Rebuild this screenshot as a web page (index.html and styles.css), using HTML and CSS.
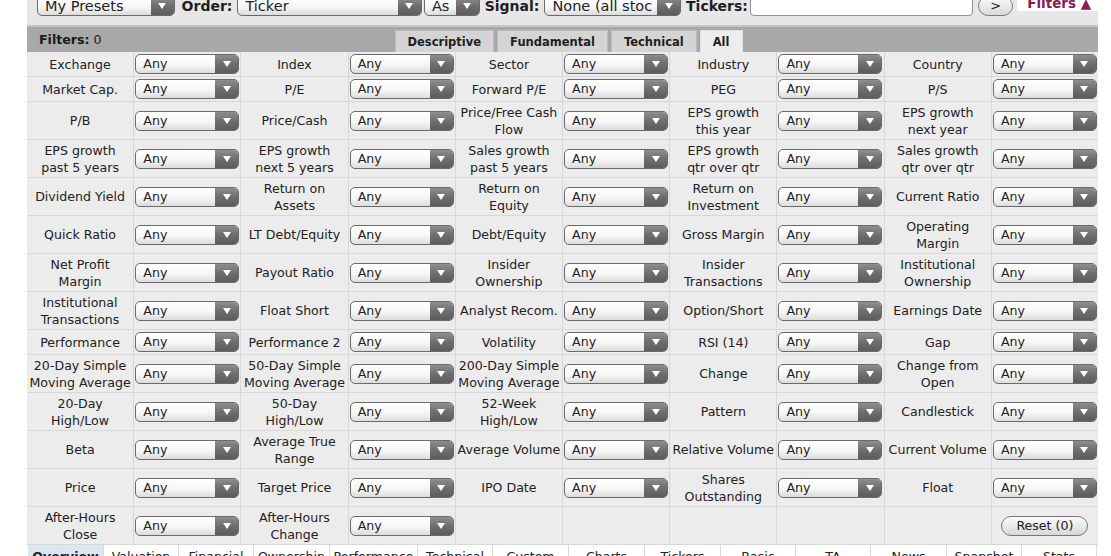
FILE: index.html
```html
<!DOCTYPE html>
<html lang="en">
<head>
<meta charset="utf-8">
<title>Screener Filters</title>
<link rel="stylesheet" href="styles.css">
</head>
<body>
<div class="screener">
  <div class="toolbar">
    <div class="sel sel-lg w-presets"><span class="sel-val">My Presets</span><span class="sel-btn"></span></div>
    <span class="tb-label">Order:</span>
    <div class="sel sel-lg w-order"><span class="sel-val">Ticker</span><span class="sel-btn"></span></div>
    <div class="sel sel-lg w-as"><span class="sel-val">As</span><span class="sel-btn"></span></div>
    <span class="tb-label">Signal:</span>
    <div class="sel sel-lg w-signal"><span class="sel-val">None (all stoc</span><span class="sel-btn"></span></div>
    <span class="tb-label">Tickers:</span>
    <div class="tickers-input"></div>
    <div class="go-btn">&gt;</div>
    <div class="filters-toggle">Filters ▲</div>
  </div>

  <div class="filter-head">
    <div class="fh-count"><b>Filters:</b> 0</div>
    <div class="fh-tabs">
      <span class="fh-tab">Descriptive</span>
      <span class="fh-tab">Fundamental</span>
      <span class="fh-tab">Technical</span>
      <span class="fh-tab active">All</span>
    </div>
    <div></div>
  </div>

  <div class="filter-grid">
    <div class="lbl">Exchange</div><div class="val"><div class="sel"><span class="sel-val">Any</span><span class="sel-btn"></span></div></div>
    <div class="lbl">Index</div><div class="val"><div class="sel"><span class="sel-val">Any</span><span class="sel-btn"></span></div></div>
    <div class="lbl">Sector</div><div class="val"><div class="sel"><span class="sel-val">Any</span><span class="sel-btn"></span></div></div>
    <div class="lbl">Industry</div><div class="val"><div class="sel"><span class="sel-val">Any</span><span class="sel-btn"></span></div></div>
    <div class="lbl">Country</div><div class="val"><div class="sel"><span class="sel-val">Any</span><span class="sel-btn"></span></div></div>

    <div class="lbl">Market Cap.</div><div class="val"><div class="sel"><span class="sel-val">Any</span><span class="sel-btn"></span></div></div>
    <div class="lbl">P/E</div><div class="val"><div class="sel"><span class="sel-val">Any</span><span class="sel-btn"></span></div></div>
    <div class="lbl">Forward P/E</div><div class="val"><div class="sel"><span class="sel-val">Any</span><span class="sel-btn"></span></div></div>
    <div class="lbl">PEG</div><div class="val"><div class="sel"><span class="sel-val">Any</span><span class="sel-btn"></span></div></div>
    <div class="lbl">P/S</div><div class="val"><div class="sel"><span class="sel-val">Any</span><span class="sel-btn"></span></div></div>

    <div class="lbl">P/B</div><div class="val"><div class="sel"><span class="sel-val">Any</span><span class="sel-btn"></span></div></div>
    <div class="lbl">Price/Cash</div><div class="val"><div class="sel"><span class="sel-val">Any</span><span class="sel-btn"></span></div></div>
    <div class="lbl">Price/Free Cash<br>Flow</div><div class="val"><div class="sel"><span class="sel-val">Any</span><span class="sel-btn"></span></div></div>
    <div class="lbl">EPS growth<br>this year</div><div class="val"><div class="sel"><span class="sel-val">Any</span><span class="sel-btn"></span></div></div>
    <div class="lbl">EPS growth<br>next year</div><div class="val"><div class="sel"><span class="sel-val">Any</span><span class="sel-btn"></span></div></div>

    <div class="lbl">EPS growth<br>past 5 years</div><div class="val"><div class="sel"><span class="sel-val">Any</span><span class="sel-btn"></span></div></div>
    <div class="lbl">EPS growth<br>next 5 years</div><div class="val"><div class="sel"><span class="sel-val">Any</span><span class="sel-btn"></span></div></div>
    <div class="lbl">Sales growth<br>past 5 years</div><div class="val"><div class="sel"><span class="sel-val">Any</span><span class="sel-btn"></span></div></div>
    <div class="lbl">EPS growth<br>qtr over qtr</div><div class="val"><div class="sel"><span class="sel-val">Any</span><span class="sel-btn"></span></div></div>
    <div class="lbl">Sales growth<br>qtr over qtr</div><div class="val"><div class="sel"><span class="sel-val">Any</span><span class="sel-btn"></span></div></div>

    <div class="lbl">Dividend Yield</div><div class="val"><div class="sel"><span class="sel-val">Any</span><span class="sel-btn"></span></div></div>
    <div class="lbl">Return on<br>Assets</div><div class="val"><div class="sel"><span class="sel-val">Any</span><span class="sel-btn"></span></div></div>
    <div class="lbl">Return on<br>Equity</div><div class="val"><div class="sel"><span class="sel-val">Any</span><span class="sel-btn"></span></div></div>
    <div class="lbl">Return on<br>Investment</div><div class="val"><div class="sel"><span class="sel-val">Any</span><span class="sel-btn"></span></div></div>
    <div class="lbl">Current Ratio</div><div class="val"><div class="sel"><span class="sel-val">Any</span><span class="sel-btn"></span></div></div>

    <div class="lbl">Quick Ratio</div><div class="val"><div class="sel"><span class="sel-val">Any</span><span class="sel-btn"></span></div></div>
    <div class="lbl">LT Debt/Equity</div><div class="val"><div class="sel"><span class="sel-val">Any</span><span class="sel-btn"></span></div></div>
    <div class="lbl">Debt/Equity</div><div class="val"><div class="sel"><span class="sel-val">Any</span><span class="sel-btn"></span></div></div>
    <div class="lbl">Gross Margin</div><div class="val"><div class="sel"><span class="sel-val">Any</span><span class="sel-btn"></span></div></div>
    <div class="lbl">Operating<br>Margin</div><div class="val"><div class="sel"><span class="sel-val">Any</span><span class="sel-btn"></span></div></div>

    <div class="lbl">Net Profit<br>Margin</div><div class="val"><div class="sel"><span class="sel-val">Any</span><span class="sel-btn"></span></div></div>
    <div class="lbl">Payout Ratio</div><div class="val"><div class="sel"><span class="sel-val">Any</span><span class="sel-btn"></span></div></div>
    <div class="lbl">Insider<br>Ownership</div><div class="val"><div class="sel"><span class="sel-val">Any</span><span class="sel-btn"></span></div></div>
    <div class="lbl">Insider<br>Transactions</div><div class="val"><div class="sel"><span class="sel-val">Any</span><span class="sel-btn"></span></div></div>
    <div class="lbl">Institutional<br>Ownership</div><div class="val"><div class="sel"><span class="sel-val">Any</span><span class="sel-btn"></span></div></div>

    <div class="lbl">Institutional<br>Transactions</div><div class="val"><div class="sel"><span class="sel-val">Any</span><span class="sel-btn"></span></div></div>
    <div class="lbl">Float Short</div><div class="val"><div class="sel"><span class="sel-val">Any</span><span class="sel-btn"></span></div></div>
    <div class="lbl">Analyst Recom.</div><div class="val"><div class="sel"><span class="sel-val">Any</span><span class="sel-btn"></span></div></div>
    <div class="lbl">Option/Short</div><div class="val"><div class="sel"><span class="sel-val">Any</span><span class="sel-btn"></span></div></div>
    <div class="lbl">Earnings Date</div><div class="val"><div class="sel"><span class="sel-val">Any</span><span class="sel-btn"></span></div></div>

    <div class="lbl">Performance</div><div class="val"><div class="sel"><span class="sel-val">Any</span><span class="sel-btn"></span></div></div>
    <div class="lbl">Performance 2</div><div class="val"><div class="sel"><span class="sel-val">Any</span><span class="sel-btn"></span></div></div>
    <div class="lbl">Volatility</div><div class="val"><div class="sel"><span class="sel-val">Any</span><span class="sel-btn"></span></div></div>
    <div class="lbl">RSI (14)</div><div class="val"><div class="sel"><span class="sel-val">Any</span><span class="sel-btn"></span></div></div>
    <div class="lbl">Gap</div><div class="val"><div class="sel"><span class="sel-val">Any</span><span class="sel-btn"></span></div></div>

    <div class="lbl">20-Day Simple<br>Moving Average</div><div class="val"><div class="sel"><span class="sel-val">Any</span><span class="sel-btn"></span></div></div>
    <div class="lbl">50-Day Simple<br>Moving Average</div><div class="val"><div class="sel"><span class="sel-val">Any</span><span class="sel-btn"></span></div></div>
    <div class="lbl">200-Day Simple<br>Moving Average</div><div class="val"><div class="sel"><span class="sel-val">Any</span><span class="sel-btn"></span></div></div>
    <div class="lbl">Change</div><div class="val"><div class="sel"><span class="sel-val">Any</span><span class="sel-btn"></span></div></div>
    <div class="lbl">Change from<br>Open</div><div class="val"><div class="sel"><span class="sel-val">Any</span><span class="sel-btn"></span></div></div>

    <div class="lbl">20-Day<br>High/Low</div><div class="val"><div class="sel"><span class="sel-val">Any</span><span class="sel-btn"></span></div></div>
    <div class="lbl">50-Day<br>High/Low</div><div class="val"><div class="sel"><span class="sel-val">Any</span><span class="sel-btn"></span></div></div>
    <div class="lbl">52-Week<br>High/Low</div><div class="val"><div class="sel"><span class="sel-val">Any</span><span class="sel-btn"></span></div></div>
    <div class="lbl">Pattern</div><div class="val"><div class="sel"><span class="sel-val">Any</span><span class="sel-btn"></span></div></div>
    <div class="lbl">Candlestick</div><div class="val"><div class="sel"><span class="sel-val">Any</span><span class="sel-btn"></span></div></div>

    <div class="lbl">Beta</div><div class="val"><div class="sel"><span class="sel-val">Any</span><span class="sel-btn"></span></div></div>
    <div class="lbl">Average True<br>Range</div><div class="val"><div class="sel"><span class="sel-val">Any</span><span class="sel-btn"></span></div></div>
    <div class="lbl">Average Volume</div><div class="val"><div class="sel"><span class="sel-val">Any</span><span class="sel-btn"></span></div></div>
    <div class="lbl">Relative Volume</div><div class="val"><div class="sel"><span class="sel-val">Any</span><span class="sel-btn"></span></div></div>
    <div class="lbl">Current Volume</div><div class="val"><div class="sel"><span class="sel-val">Any</span><span class="sel-btn"></span></div></div>

    <div class="lbl">Price</div><div class="val"><div class="sel"><span class="sel-val">Any</span><span class="sel-btn"></span></div></div>
    <div class="lbl">Target Price</div><div class="val"><div class="sel"><span class="sel-val">Any</span><span class="sel-btn"></span></div></div>
    <div class="lbl">IPO Date</div><div class="val"><div class="sel"><span class="sel-val">Any</span><span class="sel-btn"></span></div></div>
    <div class="lbl">Shares<br>Outstanding</div><div class="val"><div class="sel"><span class="sel-val">Any</span><span class="sel-btn"></span></div></div>
    <div class="lbl">Float</div><div class="val"><div class="sel"><span class="sel-val">Any</span><span class="sel-btn"></span></div></div>

    <div class="lbl">After-Hours<br>Close</div><div class="val"><div class="sel"><span class="sel-val">Any</span><span class="sel-btn"></span></div></div>
    <div class="lbl">After-Hours<br>Change</div><div class="val"><div class="sel"><span class="sel-val">Any</span><span class="sel-btn"></span></div></div>
    <div class="lbl"></div><div class="val"></div>
    <div class="lbl"></div><div class="val"></div>
    <div class="lbl"></div><div class="val"><span class="reset-btn">Reset (0)</span></div>
  </div>

  <div class="view-tabs">
    <span class="view-tab active">Overview</span>
    <span class="view-tab">Valuation</span>
    <span class="view-tab">Financial</span>
    <span class="view-tab">Ownership</span>
    <span class="view-tab">Performance</span>
    <span class="view-tab">Technical</span>
    <span class="view-tab">Custom</span>
    <span class="view-tab">Charts</span>
    <span class="view-tab">Tickers</span>
    <span class="view-tab">Basic</span>
    <span class="view-tab">TA</span>
    <span class="view-tab">News</span>
    <span class="view-tab">Snapshot</span>
    <span class="view-tab">Stats</span>
  </div>
</div>
</body>
</html>
```
FILE: styles.css
```css
* { box-sizing: border-box; }

html, body {
  margin: 0;
  padding: 0;
  background: #ffffff;
  overflow: hidden;
}

body {
  font-family: "DejaVu Sans", Verdana, sans-serif;
  font-size: 12.6px;
  color: #222222;
}

.screener {
  width: 1071px;
  margin-left: 27px;
  margin-top: -6px;
}

/* ---------- toolbar ---------- */
.toolbar {
  display: flex;
  align-items: flex-start;
  gap: 4px;
  padding: 2px 0 9px 10px;
  background: #e7e7e7;
  border-bottom: 2px solid #c4c4c4;
  font-size: 14px;
}

.tb-label {
  font-weight: bold;
  line-height: 20px;
  margin: 0 1px;
  color: #1e1e1e;
}

.sel {
  display: flex;
  width: 104px;
  height: 20px;
  border: 1px solid #6a6a6a;
  border-radius: 5px;
  overflow: hidden;
  background: linear-gradient(#ffffff 0%, #f6f6f6 55%, #dcdcdc 100%);
}

.sel-val {
  flex: 1;
  padding-left: 7px;
  line-height: 18px;
  white-space: nowrap;
  overflow: hidden;
  color: #222;
}

.sel-btn {
  position: relative;
  width: 23px;
  flex: none;
  background: linear-gradient(#8e8e8e 0%, #6e6e6e 50%, #5c5c5c 100%);
}

.sel-btn::after {
  content: "";
  position: absolute;
  left: 50%;
  top: 50%;
  margin-left: -4px;
  margin-top: -3px;
  border-left: 4px solid transparent;
  border-right: 4px solid transparent;
  border-top: 6px solid #ffffff;
}

.sel-lg { font-size: 14.5px; }

.w-presets { width: 138px; margin-right: 2px; }
.w-order { width: 185px; }
.w-as { width: 56px; margin-left: -2px; }
.w-signal { width: 137px; }

.tickers-input {
  width: 224px;
  height: 22px;
  margin-top: -2px;
  margin-left: -3px;
  background: #ffffff;
  border: 1px solid #8f8f8f;
  border-radius: 4px;
}

.go-btn {
  width: 35px;
  height: 20px;
  margin-left: 1px;
  border: 1px solid #7a7a7a;
  border-radius: 10px;
  background: linear-gradient(#fafafa, #d9d9d9);
  text-align: center;
  line-height: 18px;
  font-size: 13px;
}

.filters-toggle {
  margin-left: auto;
  width: 81px;
  height: 15px;
  padding-left: 10px;
  background: #ffffff;
  color: #86204f;
  font-weight: bold;
  font-size: 13.5px;
  line-height: 14px;
}

/* ---------- filter header ---------- */
.filter-head {
  display: grid;
  grid-template-columns: 1fr auto 1fr;
  align-items: end;
  height: 25px;
  background: #a8a8a8;
}

.fh-count {
  align-self: center;
  padding-left: 12px;
  color: #1a1a1a;
}

.fh-tabs {
  display: flex;
  gap: 3px;
  margin-left: 12px;
}

.fh-tab {
  height: 22px;
  padding: 0 12px;
  line-height: 22px;
  font-size: 11.5px;
  font-weight: bold;
  color: #1e1e1e;
  background: #d4d4d4;
  border: 1px solid #bdbdbd;
  border-bottom: none;
}

.fh-tab.active {
  background: #ededed;
  border-color: #dedede;
}

/* ---------- filter grid ---------- */
.filter-grid {
  display: grid;
  grid-template-columns: repeat(10, 1fr);
  grid-auto-rows: minmax(24px, auto);
  gap: 1px;
  background: #d7d7d7;
  border-bottom: 1px solid #d7d7d7;
}

.lbl {
  display: flex;
  align-items: center;
  justify-content: center;
  text-align: center;
  white-space: nowrap;
  line-height: 17px;
  padding: 1.5px 0;
  background: #ececec;
  color: #222;
}

.val {
  display: flex;
  align-items: center;
  justify-content: center;
  background: #ececec;
}

.reset-btn {
  height: 20px;
  padding: 0 14px;
  border: 1px solid #777777;
  border-radius: 10px;
  background: linear-gradient(#fbfbfb, #d8d8d8);
  line-height: 18px;
  white-space: nowrap;
}

/* ---------- view tabs ---------- */
.view-tabs {
  display: grid;
  grid-template-columns: 76px 75px 75px 76px 88px 75px 76px 76px 76px 75px 75px 76px 75px 75px;
  margin-left: 1px;
}

.view-tab {
  height: 24px;
  padding-top: 3px;
  text-align: center;
  white-space: nowrap;
  overflow: hidden;
  line-height: 17px;
  background: #ffffff;
  border-right: 1px solid #dadada;
  color: #222;
}

.view-tab.active {
  background: #dbe6f2;
  font-weight: bold;
}
```
